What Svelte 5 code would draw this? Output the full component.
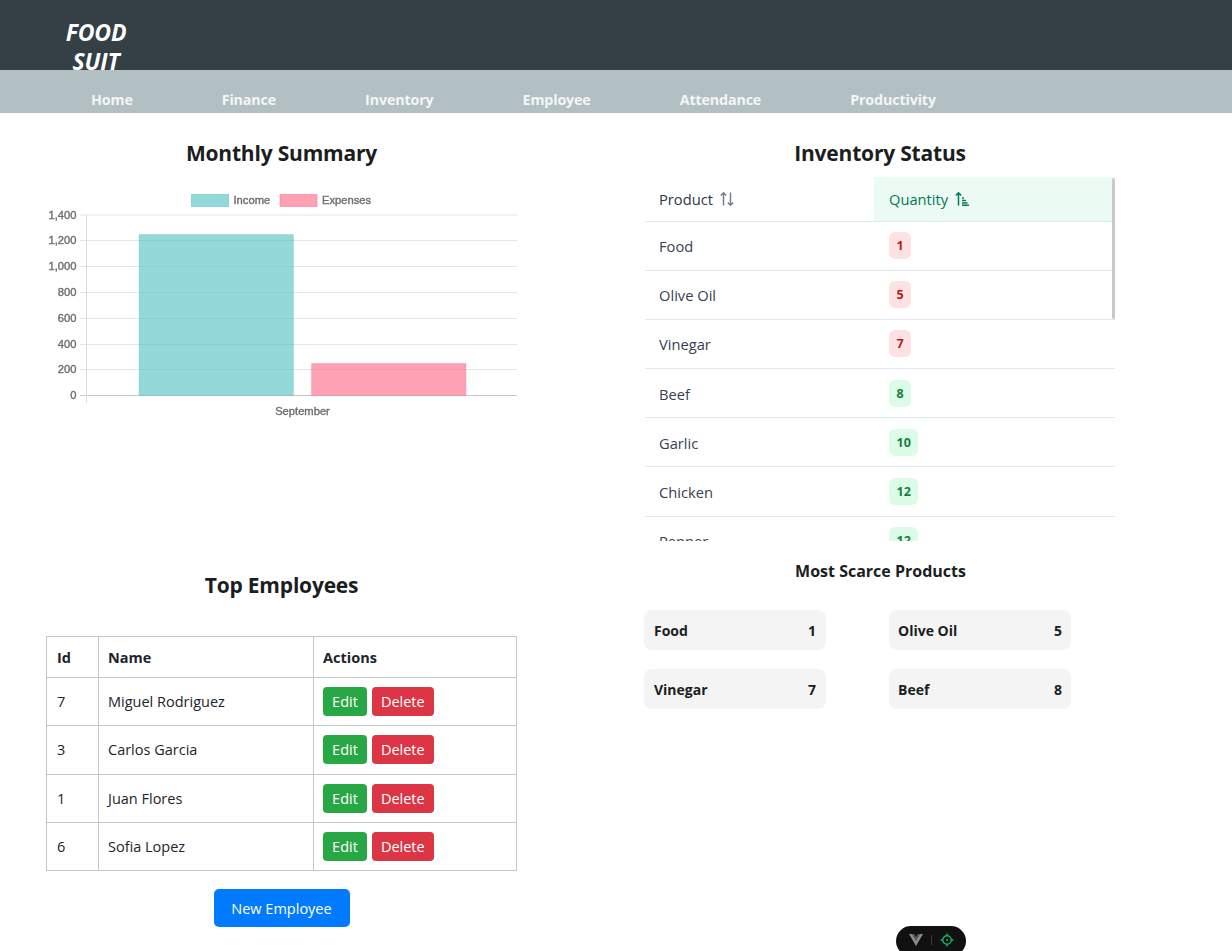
<script>
  const nav = ['Home', 'Finance', 'Inventory', 'Employee', 'Attendance', 'Productivity'];
  const stock = [
    ['Food', 1], ['Olive Oil', 5], ['Vinegar', 7], ['Beef', 8],
    ['Garlic', 10], ['Chicken', 12], ['Pepper', 12]
  ];
  const employees = [
    [7, 'Miguel Rodriguez'], [3, 'Carlos Garcia'], [1, 'Juan Flores'], [6, 'Sofia Lopez']
  ];
  const ticks = [
    ['1,400', 215], ['1,200', 240.5], ['1,000', 266.5], ['800', 292.5],
    ['600', 318.5], ['400', 344.5], ['200', 369.5], ['0', 395.5]
  ];
</script>

<div class="page">
  <header class="top">
    <div class="logo">FOOD<br />SUIT</div>
  </header>
  <nav class="nav">
    {#each nav as item}
      <span>{item}</span>
    {/each}
  </nav>

  <main class="grid">
    <section class="panel first">
      <h2>Monthly Summary</h2>
      <svg class="chart" width="471" height="250" viewBox="46 177 471 250">
        {#each ticks as [label, y]}
          <line x1="80" x2="517" y1={y} y2={y} class="gridline" class:zero={label === '0'} />
          <text x="76.5" y={y + 3.5} text-anchor="end" class="tick">{label}</text>
        {/each}
        <line x1="86.5" x2="86.5" y1="215" y2="403" class="axis" />
        <rect x="139" y="234.5" width="154.5" height="161" class="inc" />
        <rect x="311.5" y="363.5" width="154.5" height="32" class="exp" />
        <rect x="191.5" y="194.5" width="37" height="12" class="inc legend" />
        <text x="233.5" y="204" class="tick">Income</text>
        <rect x="280" y="194.5" width="37" height="12" class="exp legend" />
        <text x="322" y="204" class="tick">Expenses</text>
        <text x="302.5" y="415" text-anchor="middle" class="tick">September</text>
      </svg>
    </section>

    <section class="panel first">
      <h2>Inventory Status</h2>
      <div class="stock">
        <table>
          <thead>
            <tr>
              <th>
                <span class="th">Product
                  <svg width="16" height="16" viewBox="0 0 16 16" class="sort">
                    <path d="M4.5 14.5V2M1.8 4.6 4.5 1.8l2.7 2.8M11.5 1.5V14M8.8 11.4l2.7 2.8 2.7-2.8" />
                  </svg>
                </span>
              </th>
              <th class="active">
                <span class="th">Quantity
                  <svg width="16" height="16" viewBox="0 0 16 16" class="sort">
                    <path d="M4.5 14.5V2M1.8 4.6 4.5 1.8l2.7 2.8M8 7h2M8 9.5h4M8 12h5.5M8 14.3h7" />
                  </svg>
                </span>
              </th>
            </tr>
          </thead>
          <tbody>
            {#each stock as [name, qty]}
              <tr>
                <td class="name">{name}</td>
                <td><span class="badge" class:low={qty < 8}>{qty}</span></td>
              </tr>
            {/each}
          </tbody>
        </table>
        <div class="scrollbar"></div>
      </div>
    </section>

    <section class="panel second">
      <h2>Top Employees</h2>
      <table class="emp">
        <thead>
          <tr><th>Id</th><th>Name</th><th>Actions</th></tr>
        </thead>
        <tbody>
          {#each employees as [id, name]}
            <tr>
              <td>{id}</td>
              <td>{name}</td>
              <td class="actions">
                <button class="btn edit">Edit</button>
                <button class="btn del">Delete</button>
              </td>
            </tr>
          {/each}
        </tbody>
      </table>
      <button class="btn new">New Employee</button>
    </section>

    <section class="panel scarce">
      <h3>Most Scarce Products</h3>
      <div class="cards">
        {#each stock.slice(0, 4) as [name, qty]}
          <div class="card"><span>{name}</span><span>{qty}</span></div>
        {/each}
      </div>
    </section>
  </main>

  <div class="devbar">
    <svg width="14" height="12" viewBox="0 0 14 12">
      <path d="M0 0h3.2L7 6.5 10.8 0H14L7 12z" fill="#8b8b8b" />
      <path d="M3.2 0h2L7 3.2 8.8 0h2L7 6.5z" fill="#5c5c5c" />
    </svg>
    <i></i>
    <svg width="14" height="14" viewBox="0 0 14 14" class="target">
      <circle cx="7" cy="7" r="4.2" />
      <circle cx="7" cy="7" r="1" class="dot" />
      <path d="M7 0.5v2.3M7 11.2v2.3M0.5 7h2.3M11.2 7h2.3" />
    </svg>
  </div>
</div>

<style>
  :global(body) {
    margin: 0;
    background: #fff;
    color: #212529;
    font-family: "Open Sans", "Noto Sans", sans-serif;
  }
  .page {
    position: relative;
    height: 951px;
    overflow: hidden;
  }
  .top {
    height: 70px;
    background: #343f46;
    box-sizing: border-box;
    padding: 18px 0 0 46px;
  }
  .logo {
    width: 100px;
    text-align: center;
    color: #fff;
    font-size: 23px;
    line-height: 29px;
    font-weight: 700;
    font-style: italic;
    letter-spacing: -0.2px;
  }
  .nav {
    height: 43px;
    background: #b2c0c3;
    display: flex;
    align-items: center;
    gap: 89px;
    padding: 15px 0 0 91px;
    box-sizing: border-box;
    color: #f4f6f6;
    font-size: 14.3px;
    font-weight: 700;
    letter-spacing: -0.15px;
  }
  .grid {
    display: grid;
    grid-template-columns: 471px 470px;
    grid-template-rows: 429px auto;
    column-gap: 128px;
    padding-left: 46px;
  }
  h2 {
    margin: 0;
    font-size: 21px;
    line-height: 28px;
    font-weight: 700;
    text-align: center;
    color: #1b1e21;
    letter-spacing: -0.2px;
  }
  .first {
    padding-top: 26px;
  }
  .chart {
    display: block;
    margin-top: 10px;
    filter: blur(0.3px);
  }
  .gridline {
    stroke: #e5e5e5;
    stroke-width: 1;
  }
  .gridline.zero {
    stroke: #c8c8c8;
  }
  .axis {
    stroke: #dcdcdc;
    stroke-width: 1;
  }
  .tick {
    font-family: "Liberation Sans", Arial, sans-serif;
    font-size: 11.2px;
    fill: #707070;
    stroke: #707070;
    stroke-width: 0.4;
  }
  .inc {
    fill: rgba(75, 192, 192, 0.6);
    stroke: rgba(75, 192, 192, 0.25);
  }
  .exp {
    fill: rgba(255, 99, 132, 0.6);
    stroke: rgba(255, 99, 132, 0.25);
  }
  .inc.legend {
    stroke: rgba(75, 192, 192, 0.5);
  }
  .exp.legend {
    stroke: rgba(255, 99, 132, 0.5);
  }
  .stock {
    position: relative;
    margin-top: 10px;
    height: 364px;
    overflow: hidden;
  }
  .stock table {
    width: 470px;
    border-collapse: collapse;
    table-layout: fixed;
    color: #374151;
    font-size: 14.7px;
  }
  .stock th {
    height: 44px;
    padding: 1px 14px 0;
    text-align: left;
    font-weight: 400;
    font-size: 14.7px;
    color: #2d3748;
    border-bottom: 1px solid #e2e8f0;
    box-sizing: border-box;
  }
  .stock th:first-child {
    width: 229px;
  }
  .stock th.active {
    background: #ebfbf3;
    color: #047857;
    padding-left: 15px;
  }
  .th {
    display: flex;
    align-items: center;
    gap: 6px;
  }
  .sort {
    fill: none;
    stroke: #718096;
    stroke-width: 1.5;
  }
  .active .sort {
    stroke: #047857;
  }
  .stock td {
    height: 49.2px;
    padding: 0 14px;
    border-bottom: 1px solid #e2e8f0;
    box-sizing: border-box;
  }
  .stock td.name {
    padding-top: 1px;
  }
  .stock td:last-child {
    padding-left: 15px;
  }
  .badge {
    display: inline-block;
    min-width: 22px;
    height: 27px;
    line-height: 27px;
    padding: 0 7.5px;
    box-sizing: border-box;
    border-radius: 6px;
    text-align: center;
    font-size: 12.5px;
    font-weight: 700;
    background: #dcfce7;
    color: #15803d;
    vertical-align: middle;
  }
  .badge.low {
    background: #fee2e2;
    color: #b91c1c;
  }
  .scrollbar {
    position: absolute;
    top: 1px;
    right: 0;
    width: 3px;
    height: 141px;
    background: #c9c9c9;
    border-radius: 2px;
  }
  .second {
    padding-top: 29px;
  }
  .emp {
    width: 471px;
    margin-top: 37px;
    border-collapse: collapse;
    table-layout: fixed;
    font-size: 14.5px;
    color: #212529;
  }
  .emp th,
  .emp td {
    border: 1px solid #c6c6c6;
    padding: 0 9px;
    text-align: left;
    box-sizing: border-box;
  }
  .emp th:first-child,
  .emp td:first-child {
    padding-left: 10px;
  }
  .emp th {
    height: 41px;
    font-weight: 700;
  }
  .emp td {
    height: 48.25px;
  }
  .emp th:nth-child(1) {
    width: 52px;
  }
  .emp th:nth-child(2) {
    width: 215px;
  }
  .emp td.actions {
    white-space: nowrap;
  }
  .btn {
    border: 0;
    color: #fff;
    font-family: inherit;
    font-size: 14.5px;
    border-radius: 4px;
    padding: 0;
    height: 29px;
    vertical-align: middle;
  }
  .edit {
    width: 44px;
    background: #28a745;
  }
  .del {
    width: 62px;
    margin-left: 1px;
    background: #dc3545;
  }
  .new {
    display: block;
    margin: 18px auto 0;
    width: 136px;
    height: 38px;
    background: #007bff;
    border-radius: 5px;
  }
  .scarce {
    margin-left: -1px;
    padding-top: 18px;
  }
  h3 {
    margin: 0;
    font-size: 16px;
    line-height: 22px;
    font-weight: 700;
    text-align: center;
    color: #1b1e21;
    padding-left: 2px;
  }
  .cards {
    margin-top: 28px;
    display: grid;
    grid-template-columns: 182px 182px;
    column-gap: 63px;
    row-gap: 19px;
  }
  .card {
    height: 40px;
    border-radius: 8px;
    background: #f4f4f4;
    display: flex;
    align-items: center;
    justify-content: space-between;
    padding: 0 10px;
    font-size: 14px;
    font-weight: 700;
    color: #1b1e21;
  }
  .card:nth-child(even) {
    padding-left: 9px;
    padding-right: 9px;
  }
  .devbar {
    position: absolute;
    left: 896px;
    top: 926px;
    width: 70px;
    height: 30px;
    border-radius: 15px;
    background: #111;
    display: flex;
    align-items: center;
    justify-content: center;
    gap: 8px;
    padding-bottom: 2px;
    box-sizing: border-box;
  }
  .devbar i {
    width: 1px;
    height: 10px;
    background: #3c3c3c;
  }
  .target {
    fill: none;
    stroke: #10b462;
    stroke-width: 1.4;
  }
  .target .dot {
    fill: #10b462;
    stroke: none;
  }
</style>
